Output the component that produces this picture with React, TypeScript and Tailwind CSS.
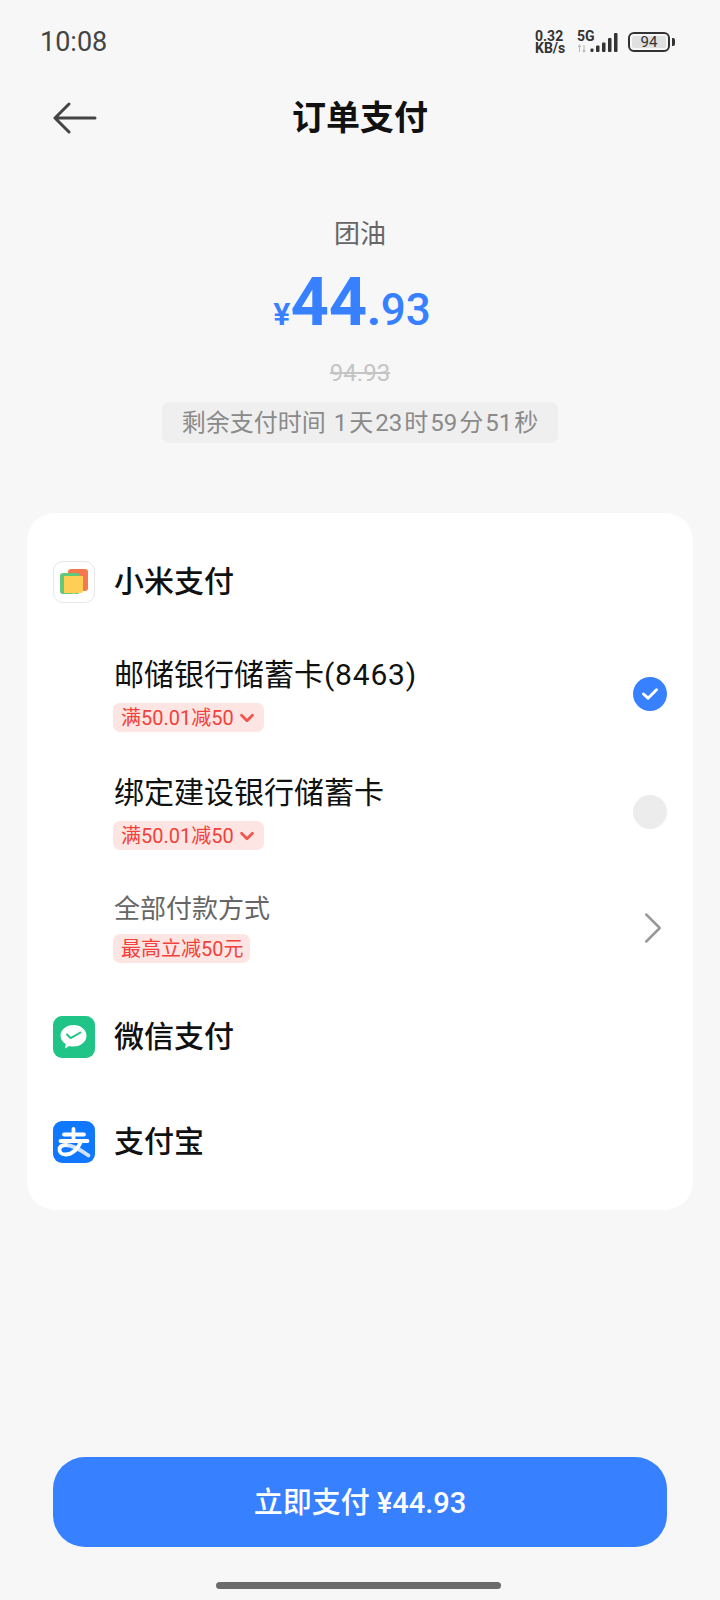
import { ChevronDown, ChevronRight } from "lucide-react";

const font = "font-['Roboto','Noto_Sans_CJK_SC',sans-serif]";

function Signal() {
  return (
    <svg width="44" height="24" viewBox="0 0 44 24" className="absolute left-0 top-0">
      <g fill="#333">
        <rect x="13.500" y="18.500" width="3" height="3.500" rx="1" />
        <rect x="19" y="15.500" width="3.500" height="6.500" rx="1" />
        <rect x="25" y="12.500" width="3.500" height="9.500" rx="1" />
        <rect x="31" y="8" width="3.500" height="14" rx="1" />
        <rect x="37" y="3" width="3.500" height="19" rx="1" />
      </g>
      <path d="M2.500 15v7M1.200 17 2.500 15l1.300 2M7 22v-7M5.700 20 7 22l1.300-2" stroke="#bbb" strokeWidth="1.100" fill="none" />
    </svg>
  );
}

function StatusBar() {
  return (
    <div className="h-[84px] flex items-center justify-between pl-[40px] pr-[45px]">
      <span className="text-[27px] text-[#444] leading-none">10:08</span>
      <div className="flex items-center">
        <div className="flex flex-col text-[14px] font-bold leading-[12px] text-[#333] w-[42px]">
          <span>0.32</span>
          <span>KB/s</span>
        </div>
        <div className="relative w-[51px] h-[24px]">
          <span className="absolute left-0 top-0 text-[14px] font-bold leading-[13px] text-[#333]">5G</span>
          <Signal />
        </div>
        <div className="flex items-center gap-[2px]">
          <div className="w-[42px] h-[20px] rounded-[6px] border-2 border-[#333] p-[2px] flex">
            <div className="w-[34px] h-full rounded-[2px] bg-[#e0e0e0] flex items-center justify-center text-[15px] leading-none text-[#333]">
              94
            </div>
          </div>
          <div className="w-[3px] h-[8px] rounded-r-[2px] bg-[#333]" />
        </div>
      </div>
    </div>
  );
}

function Tag({ text, arrow }: { text: string; arrow?: boolean }) {
  return (
    <div
      className={`h-[29px] w-fit flex items-center rounded-[7px] bg-[#fde5e3] pl-[8px] text-[20px] leading-none text-[#f2413a] ${
        arrow ? "pr-[6px]" : "pr-[7px]"
      }`}
    >
      <span>{text}</span>
      {arrow && <ChevronDown size={22} strokeWidth={3} className="ml-[2px] text-[#f2554d]" />}
    </div>
  );
}

function Radio({ checked }: { checked?: boolean }) {
  if (checked) {
    return (
      <div className="w-[34px] h-[34px] shrink-0 rounded-full bg-[#3780ff] flex items-center justify-center">
        <svg width="18" height="14" viewBox="0 0 18 14">
          <path d="M2.500 7l4.500 4.200L15.500 2.800" stroke="#fff" strokeWidth="3" fill="none" strokeLinecap="round" strokeLinejoin="round" />
        </svg>
      </div>
    );
  }
  return <div className="w-[34px] h-[34px] shrink-0 rounded-full bg-[#ececec]" />;
}

function MiPayIcon() {
  return (
    <div className="w-[42px] h-[42px] shrink-0 rounded-[10px] border border-[#e6e6e6] bg-white">
      <svg width="40" height="40" viewBox="0 0 40 40">
        <rect x="14" y="7" width="20" height="22" rx="3" fill="#f5794c" />
        <rect x="6" y="11" width="20" height="21" rx="3" fill="#62c87a" />
        <path d="M10 14h19v15a2 2 0 0 1-2 2h-6l-1.500 1.500L18 31h-8z" fill="#ffcf55" />
      </svg>
    </div>
  );
}

function WechatIcon() {
  return (
    <div className="w-[42px] h-[42px] shrink-0 rounded-[9px] bg-[#1fc486] flex items-center justify-center">
      <svg width="42" height="42" viewBox="0 0 42 42">
        <path d="M20.500 9c7.200 0 13 4.900 13 10.800s-5.800 10.800-13 10.800c-1.400 0-2.800-.2-4.100-.6l-4.400 2.500.8-4.300C9.800 26.300 7.500 23.300 7.500 19.800 7.500 13.900 13.300 9 20.500 9z" fill="#fff" />
        <path d="M14 18.500l3 3c.4.400 1 .5 1.500.2l9-5.200" stroke="#1fc486" strokeWidth="2" fill="none" strokeLinecap="round" />
      </svg>
    </div>
  );
}

function AlipayIcon() {
  return (
    <div className="w-[42px] h-[42px] shrink-0 rounded-[9px] bg-[#0f78ff] overflow-hidden">
      <svg width="42" height="42" viewBox="0 0 42 42" fill="none" strokeLinecap="round">
        <path d="M11 13.500h20M7.500 20h27M20.500 8v12" stroke="#fff" strokeWidth="3.800" />
        <path d="M13 24c6 0 14 4.500 22.500 10.500" stroke="#cfe2ff" strokeWidth="3.800" />
        <path d="M28 20c-2.500 8-9 13.500-15.500 13.500-3.800 0-6-2-6-4.800 0-3 2.500-4.700 6.500-4.700" stroke="#fff" strokeWidth="3.800" />
      </svg>
    </div>
  );
}

function MethodRow({ icon, name, className }: { icon: React.ReactNode; name: string; className: string }) {
  return (
    <div className={`flex items-center pl-[26px] pr-[26px] ${className}`}>
      {icon}
      <span className="ml-[19px] flex-1 text-[30px] leading-none font-medium text-[#111]">{name}</span>
    </div>
  );
}

function CardRow({
  name,
  tag,
  arrow,
  checked,
  className,
}: {
  name: React.ReactNode;
  tag: string;
  arrow?: boolean;
  checked?: boolean;
  className: string;
}) {
  return (
    <div className={`flex items-center pl-[86px] pr-[26px] ${className}`}>
      <div className="flex-1">
        <div className="h-[40px] flex items-center pl-[1px] text-[30px] leading-none text-[#111]">{name}</div>
        <div className="mt-[8px]">
          <Tag text={tag} arrow={arrow} />
        </div>
      </div>
      <Radio checked={checked} />
    </div>
  );
}

export default function App() {
  return (
    <div className={`${font} w-[720px] h-[1600px] bg-[#f7f7f7] flex flex-col overflow-hidden`}>
      <StatusBar />

      {/* nav */}
      <div className="relative h-[68px] flex items-center justify-center">
        <svg width="44" height="34" viewBox="0 0 44 34" className="absolute left-[53px] top-[17px]">
          <path d="M2 17h40M16 3 2 17l14 14" stroke="#444" strokeWidth="3" fill="none" strokeLinecap="round" strokeLinejoin="round" />
        </svg>
        <span className="text-[34px] leading-none font-bold text-[#111]">订单支付</span>
      </div>

      {/* amount */}
      <div className="flex flex-col items-center pt-[65px]">
        <div className="h-[34px] flex items-center text-[26px] leading-none text-[#666]">团油</div>
        <div className="mt-[19px] h-[64px] flex items-baseline pr-[16px] text-[#3780ff]">
          <span className="text-[32px] font-semibold leading-none">¥</span>
          <span className="text-[67px] font-bold leading-[64px]">44</span>
          <span className="text-[44px] font-black leading-none">.</span>
          <span className="text-[44px] font-medium leading-none">93</span>
        </div>
        <div className="mt-[24px] h-[30px] flex items-center text-[24px] leading-none text-[#c4c4c4] line-through">94.93</div>
        <div className="mt-[14px] w-[396px] h-[41px] rounded-[7px] bg-[#efefef] flex items-center justify-center text-[24px] leading-none text-[#8a8a8a]">
          <span>剩余支付时间</span>
          <span className="ml-[8px] mr-[2px]">1</span>
          <span>天</span>
          <span className="mx-[2px]">23</span>
          <span>时</span>
          <span className="mx-[2px]">59</span>
          <span>分</span>
          <span className="mx-[2px]">51</span>
          <span>秒</span>
        </div>
      </div>

      {/* pay methods */}
      <div className="mt-[70px] mx-[27px] h-[697px] rounded-[28px] bg-white pt-[48px]">
        <MethodRow icon={<MiPayIcon />} name="小米支付" className="" />
        <CardRow
          name={
            <>
              邮储银行储蓄卡<span className="tracking-[0.8px]">(8463)</span>
            </>
          }
          tag="满50.01减50"
          arrow
          checked
          className="mt-[52px]"
        />
        <CardRow name="绑定建设银行储蓄卡" tag="满50.01减50" arrow className="mt-[41px]" />
        <div className="mt-[42px] flex items-center pl-[86px] pr-[26px]">
          <div className="flex-1">
            <div className="h-[34px] flex items-center pl-[1px] text-[26px] leading-none text-[#666]">全部付款方式</div>
            <div className="mt-[8px]">
              <Tag text="最高立减50元" />
            </div>
          </div>
          <ChevronRight size={54} strokeWidth={1.100} className="text-[#999] mr-[-13px] my-[-10px]" />
        </div>
        <MethodRow icon={<WechatIcon />} name="微信支付" className="mt-[53px]" />
        <MethodRow icon={<AlipayIcon />} name="支付宝" className="mt-[63px]" />
      </div>

      {/* pay button */}
      <div className="mt-auto mx-[53px] h-[90px] pt-[2px] rounded-[32px] bg-[#3780ff] flex items-center justify-center text-[29px] leading-none font-medium text-white">
        立即支付 ¥44.93
      </div>
      <div className="mt-[35px] mb-[11px] ml-[216px] w-[285px] h-[7px] rounded-full bg-[#6b6b6b]" />
    </div>
  );
}
